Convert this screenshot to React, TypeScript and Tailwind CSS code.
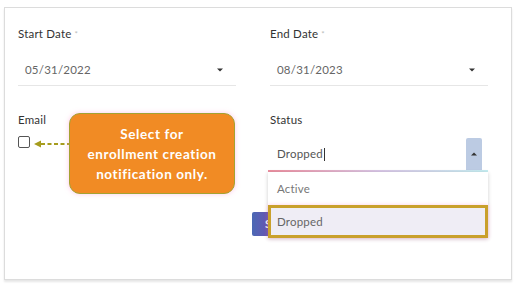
import React from 'react'

function Caret({ up = false }: { up?: boolean }) {
  return (
    <svg width="6" height="4" viewBox="0 0 6 4" className="block">
      {up ? <path d="M0 3.5 L3 0.5 L6 3.5 Z" fill="#333" /> : <path d="M0 0.5 L6 0.5 L3 3.5 Z" fill="#333" />}
    </svg>
  )
}

function Label({ text, required = false }: { text: string; required?: boolean }) {
  return (
    <div className="h-[14px] leading-[14px] text-[11.5px] text-[#333] tracking-[0.2px]">
      {text}
      {required && <span className="ml-[3px] text-[8px] align-top text-[#bbb]">*</span>}
    </div>
  )
}

function DateField({ label, value }: { label: string; value: string }) {
  return (
    <div>
      <Label text={label} required />
      <div className="mt-[13px] h-[32px] border-b border-[#e6e6e6] flex items-center justify-between pl-[7px] pr-[13px]">
        <span className="text-[11.5px] text-[#666] tracking-[0.2px]">{value}</span>
        <Caret />
      </div>
    </div>
  )
}

export default function App() {
  return (
    <div className="w-[520px] h-[289px] bg-white pt-[7px] pl-[4px]" style={{ fontFamily: 'Lato, "Open Sans", sans-serif' }}>
      <div className="relative w-[508px] h-[273px] border border-[#dcdcdc] shadow-[0_2px_2px_rgba(0,0,0,0.1)] bg-white pt-[19px] pl-[13px]">
        <div className="grid grid-cols-[218px_218px] gap-x-[34px]">
          <DateField label="Start Date" value="05/31/2022" />
          <DateField label="End Date" value="08/31/2023" />

          <div className="mt-[27px]">
            <Label text="Email" />
            <div className="mt-[9px] w-[12px] h-[12px] rounded-[2px] border border-[#555]" />
          </div>

          <div className="mt-[27px] relative">
            <Label text="Status" />
            <div className="mt-[10px] h-[33px] flex items-center justify-between pl-[7px] pr-[6px]">
              <span className="text-[11.5px] text-[#555] tracking-[0.2px]">
                Dropped<span className="inline-block w-px h-[13px] bg-[#333] align-middle ml-px" />
              </span>
              <div className="w-[16px] h-[32px] bg-[#bccbe3] rounded-t-[2px] flex items-center justify-center">
                <Caret up />
              </div>
            </div>
            <div className="-ml-[2px] h-[2px] bg-gradient-to-r from-[#ec8fa0] via-[#d9c6e6] to-[#c6eef2]" />

            {/* open dropdown */}
            <div className="absolute left-[-2px] top-[59px] w-[220px] bg-white shadow-[0_1px_4px_rgba(0,0,0,0.2)] z-10">
              <div className="h-[33px] flex items-center pl-[9px] text-[11.5px] text-[#777] tracking-[0.2px]">Active</div>
              <div className="h-[33px] flex items-center pl-[6px] text-[11.5px] text-[#666] tracking-[0.2px] bg-[#efedf5] border-[3px] border-[#c9a02c] shadow-[0_0_4px_rgba(255,140,200,0.45)]">
                Dropped
              </div>
            </div>
          </div>
        </div>

        <div className="mt-[38px] pl-[234px]">
          <button className="w-[20px] h-[24px] rounded-l-[2px] bg-gradient-to-r from-[#4a68b4] to-[#6a4fb2] text-white text-[11px] font-bold pl-[13px] text-left overflow-hidden">
            S
          </button>
        </div>

        {/* callout */}
        <svg className="absolute left-[28px] top-[131px]" width="38" height="10" viewBox="0 0 38 10">
          <path d="M1 5 L8 1.5 L8 8.5 Z" fill="#a69c1e" />
          <line x1="8" y1="5" x2="38" y2="5" stroke="#a69c1e" strokeWidth="2" strokeDasharray="4 2.5" />
        </svg>
        <div className="absolute left-[64px] top-[105px] w-[166px] h-[81px] rounded-[11px] bg-[#f18b24] border border-[#a3a332] shadow-[0_0_5px_rgba(255,150,210,0.5)] flex items-center justify-center text-center text-white font-bold text-[13.5px] leading-[20px] tracking-[0.6px]">
          Select for
          <br />
          enrollment creation
          <br />
          notification only.
        </div>
      </div>
    </div>
  )
}
